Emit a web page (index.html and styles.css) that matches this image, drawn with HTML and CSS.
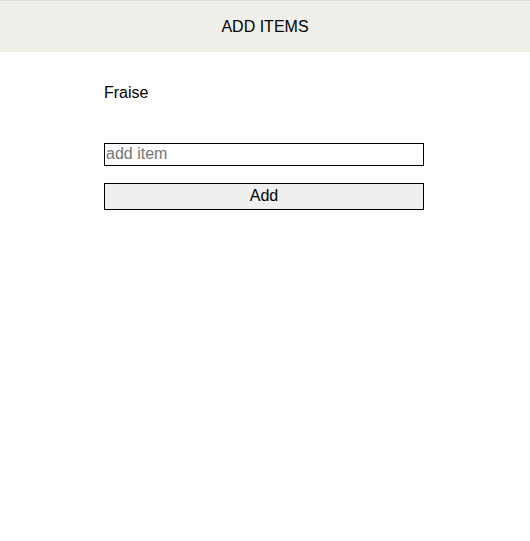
FILE: index.html
```html
<!DOCTYPE html>
<html>
<head>
<meta charset="utf-8">
<link rel="stylesheet" href="styles.css">
</head>
<body>
<header class="topbar">ADD ITEMS</header>
<main class="content">
  <ul class="items">
    <li class="item">Fraise</li>
  </ul>
  <form class="add-form">
    <input class="add-input" type="text" placeholder="add item">
    <button class="add-btn" type="button">Add</button>
  </form>
</main>
</body>
</html>
```

FILE: styles.css
```css
* { box-sizing: border-box; }
html, body { margin: 0; padding: 0; background: #fff; }
body {
  font-family: "Liberation Sans", Arial, sans-serif;
  font-size: 16px;
  color: #000;
}
.topbar {
  height: 52px;
  border-top: 1px solid #dcdcd8;
  background: #efeee9;
  display: flex;
  align-items: center;
  justify-content: center;
  font-size: 16px;
}
.content {
  width: 424px;
  padding-left: 104px;
  padding-top: 32px;
}
.items {
  list-style: none;
  margin: 0;
  padding: 0;
}
.item {
  line-height: 18px;
}
.add-form {
  display: flex;
  flex-direction: column;
  gap: 17px;
  margin-top: 41px;
}
.add-input {
  width: 320px;
  height: 23px;
  border: 1px solid #000;
  border-radius: 0;
  padding: 0 1px 1px;
  font-family: "Liberation Sans", Arial, sans-serif;
  font-size: 16px;
  outline: none;
}
.add-input::placeholder { color: #757575; }
.add-btn {
  width: 320px;
  height: 27px;
  border: 1px solid #000;
  border-radius: 0;
  background: #efefef;
  font-family: "Liberation Sans", Arial, sans-serif;
  font-size: 16px;
  color: #000;
  padding: 0 0 2px;
}
```
